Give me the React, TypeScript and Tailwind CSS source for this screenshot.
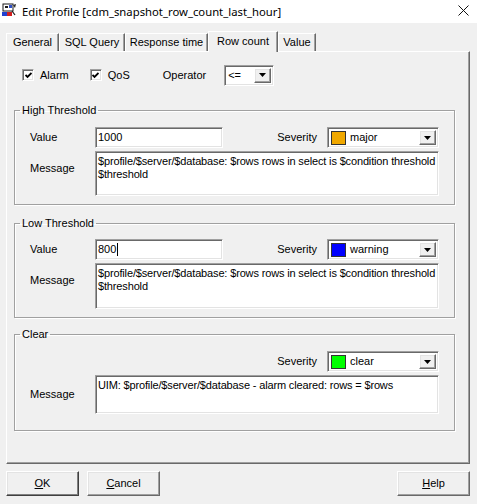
import type { ReactNode } from 'react';

const sunken =
  'border border-t-[#a0a0a0] border-l-[#a0a0a0] border-r-white border-b-white shadow-[inset_1px_1px_0_#696969,inset_-1px_-1px_0_#e3e3e3]';
const raised =
  'border border-t-white border-l-white border-r-[#696969] border-b-[#696969] shadow-[inset_-1px_-1px_0_#a0a0a0,inset_1px_1px_0_#e3e3e3]';

function AppIcon() {
  return (
    <svg width="16" height="14" viewBox="0 0 16 14" aria-hidden="true">
      <rect x="2" y="1" width="10" height="7" fill="#ffffff" stroke="#1a1a1a" strokeWidth="1" />
      <rect x="4" y="3" width="3" height="2" fill="#1a1a1a" />
      <rect x="8" y="2" width="3" height="3" fill="#3050c8" />
      <path d="M12 2 L15 1 L14 5 Z" fill="#2a2a2a" />
      <rect x="1" y="9" width="5" height="4" fill="#2040d0" />
      <rect x="6" y="9" width="5" height="4" fill="#d02020" />
      <path d="M11 8 L14 12" stroke="#1a1a1a" strokeWidth="1.2" />
    </svg>
  );
}

function TitleBar() {
  return (
    <div className="flex h-[23px] items-center bg-white">
      <div className="ml-[1px] mt-[-4px] flex w-[21px] justify-start">
        <AppIcon />
      </div>
      <span className="font-['Noto_Sans',sans-serif] text-[11.3px] leading-none text-black">
        Edit Profile [cdm_snapshot_row_count_last_hour]
      </span>
      <svg className="ml-auto mr-[8px] mt-[-2px]" width="11" height="11" viewBox="0 0 11 11" aria-hidden="true">
        <path d="M0.5 0.5 L10.5 10.5 M10.5 0.5 L0.5 10.5" stroke="#111" strokeWidth="1" />
      </svg>
    </div>
  );
}

const TABS = [
  { label: 'General', w: 'w-[53px]' },
  { label: 'SQL Query', w: 'w-[66px]' },
  { label: 'Response time', w: 'w-[83px]' },
  { label: 'Row count', w: 'w-[70px]', active: true },
  { label: 'Value', w: 'w-[38px]' },
];

function Tabs() {
  return (
    <div className="mt-[8px] flex h-[20px] items-end pl-[6px]">
      {TABS.map((t) =>
        t.active ? (
          <div
            key={t.label}
            className={`${t.w} relative z-10 -mb-px flex h-[21px] items-center justify-center border-l border-t border-l-white border-t-white border-r border-r-[#696969] bg-[#f0f0f0] pb-[2px] shadow-[inset_-1px_0_0_#a0a0a0]`}
          >
            {t.label}
          </div>
        ) : (
          <div
            key={t.label}
            className={`${t.w} flex h-[18px] items-center justify-center border-l border-t border-l-white border-t-white border-r border-r-[#696969] shadow-[inset_-1px_0_0_#a0a0a0]`}
          >
            {t.label}
          </div>
        ),
      )}
    </div>
  );
}

function CheckBox({ label }: { label: string }) {
  return (
    <label className="flex items-center gap-[6px]">
      <span className={`${sunken} flex h-[12px] w-[12px] items-center justify-center bg-white`}>
        <svg width="7" height="7" viewBox="0 0 7 7" aria-hidden="true">
          <path d="M0.5 3 L2.5 5 L6.5 1" fill="none" stroke="#000" strokeWidth="1.8" />
        </svg>
      </span>
      <span>{label}</span>
    </label>
  );
}

function Arrow() {
  return (
    <span className={`${raised} flex h-full w-[17px] items-center justify-center bg-[#f0f0f0]`}>
      <svg width="7" height="4" viewBox="0 0 7 4" aria-hidden="true">
        <path d="M0 0 H7 L3.5 4 Z" fill="#000" />
      </svg>
    </span>
  );
}

function Combo({ children, w }: { children: ReactNode; w: string }) {
  return (
    <div className={`${sunken} ${w} flex h-[21px] items-center bg-white p-[2px]`}>
      <div className="flex flex-1 items-center gap-[4px] pl-[1px]">{children}</div>
      <Arrow />
    </div>
  );
}

function SeverityCombo({ color, label }: { color: string; label: string }) {
  return (
    <div className="flex items-center gap-[10px]">
      <span>Severity</span>
      <Combo w="w-[112px]">
        <span className="h-[14px] w-[15px] border border-[#333]" style={{ backgroundColor: color }} />
        <span>{label}</span>
      </Combo>
    </div>
  );
}

function GroupBox({ title, children, pb }: { title: string; children: ReactNode; pb: string }) {
  return (
    <fieldset
      className={`ml-[7px] w-[441px] border border-[#a0a0a0] pl-[15px] pr-[15px] shadow-[1px_1px_0_#fff,inset_1px_1px_0_#fff] ${pb}`}
    >
      <legend className="ml-[-10px] px-[2px] leading-[13px]">{title}</legend>
      {children}
    </fieldset>
  );
}

function TextArea({ text, h }: { text: string; h: string }) {
  return (
    <div className={`${sunken} ${h} w-[344px] bg-white pl-[2px] pr-0 pt-[3px] leading-[13px] tracking-[-0.15px]`}>
      {text}
    </div>
  );
}

const MSG = '$profile/$server/$database: $rows rows in select is $condition threshold $threshold';

function Panel() {
  return (
    <div className="ml-[6px] h-[413px] w-[464px] border border-t-white border-l-white border-r-[#696969] border-b-[#696969] shadow-[inset_-1px_-1px_0_#a0a0a0]">
      <div className="mt-[13px] flex h-[20px] items-center pl-[15px]">
        <CheckBox label="Alarm" />
        <div className="ml-[21px]">
          <CheckBox label="QoS" />
        </div>
        <span className="ml-[33px]">Operator</span>
        <div className="ml-[18px]">
          <Combo w="w-[50px]">
            <span>&lt;=</span>
          </Combo>
        </div>
      </div>

      <div className="mt-[19px]">
        <GroupBox title="High Threshold" pb="pb-[8px]">
          <div className="mt-[10px] flex items-center">
            <span className="w-[65px]">Value</span>
            <div className={`${sunken} flex h-[21px] w-[128px] items-center bg-white px-[2px]`}>1000</div>
            <div className="ml-auto">
              <SeverityCombo color="#f0a800" label="major" />
            </div>
          </div>
          <div className="mt-[3px] flex items-start">
            <span className="mt-[9px] w-[65px]">Message</span>
            <TextArea text={MSG} h="h-[45px]" />
          </div>
        </GroupBox>
      </div>

      <div className="mt-[12px]">
        <GroupBox title="Low Threshold" pb="pb-[8px]">
          <div className="mt-[9px] flex items-center">
            <span className="w-[65px]">Value</span>
            <div className={`${sunken} flex h-[21px] w-[128px] items-center bg-white px-[2px]`}>
              800<span className="ml-px h-[13px] w-px bg-black" />
            </div>
            <div className="ml-auto">
              <SeverityCombo color="#0000ff" label="warning" />
            </div>
          </div>
          <div className="mt-[3px] flex items-start">
            <span className="mt-[9px] w-[65px]">Message</span>
            <TextArea text={MSG} h="h-[46px]" />
          </div>
        </GroupBox>
      </div>

      <div className="mt-[10px]">
        <GroupBox title="Clear" pb="pb-[16px]">
          <div className="mt-[10px] flex items-center justify-end">
            <SeverityCombo color="#00ff00" label="clear" />
          </div>
          <div className="mt-[3px] flex items-center">
            <span className="w-[65px]">Message</span>
            <TextArea text="UIM: $profile/$server/$database - alarm cleared: rows = $rows" h="h-[39px]" />
          </div>
        </GroupBox>
      </div>
    </div>
  );
}

function Button({ children, primary }: { children: ReactNode; primary?: boolean }) {
  return (
    <button
      className={`flex h-[25px] w-[73px] items-center justify-center bg-[#f0f0f0] ${
        primary
          ? 'border border-t-white border-l-white border-r-[#404040] border-b-[#404040] shadow-[inset_-1px_-1px_0_#808080,inset_1px_1px_0_#e3e3e3]'
          : raised
      }`}
    >
      {children}
    </button>
  );
}

function Buttons() {
  return (
    <div className="mt-[7px] flex px-[6px]">
      <Button primary>
        <span>
          <u>O</u>K
        </span>
      </Button>
      <div className="ml-[8px]">
        <Button>
          <span>
            <u>C</u>ancel
          </span>
        </Button>
      </div>
      <div className="ml-auto mr-[1px]">
        <Button>
          <span>
            <u>H</u>elp
          </span>
        </Button>
      </div>
    </div>
  );
}

export default function App() {
  return (
    <div className="h-[504px] w-[477px] overflow-hidden bg-[#f0f0f0] font-['Liberation_Sans',Arial,sans-serif] text-[11px] text-black">
      <TitleBar />
      <Tabs />
      <Panel />
      <Buttons />
    </div>
  );
}
